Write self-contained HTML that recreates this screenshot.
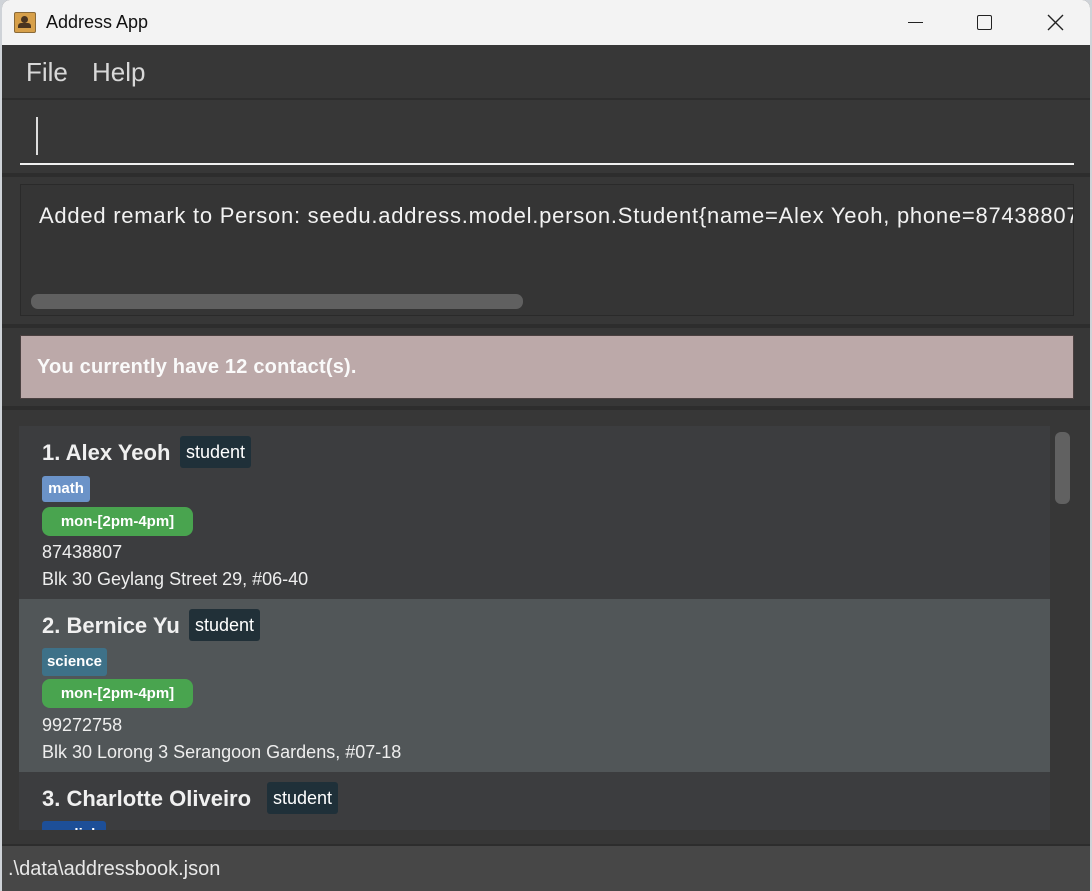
<!DOCTYPE html>
<html><head><meta charset="utf-8"><style>
*{margin:0;padding:0;box-sizing:border-box}
body{width:1092px;height:891px;background:#cfd3d8;position:relative;overflow:hidden;font-family:"Liberation Sans","DejaVu Sans",sans-serif}
.a{position:absolute}
.t{position:absolute;white-space:nowrap;color:#fff}
.tag{position:absolute;height:32px;line-height:32px;font-size:18px;font-weight:bold;color:#fff;border-radius:3px;padding:0 6px}
.name{font-size:22px;font-weight:bold;color:#f0f0f0}
.sm{font-size:15px;font-weight:bold;color:#fff;border-radius:3px;position:absolute;text-align:center}
.inf{font-size:18px;color:#eee}
</style></head><body>
<div class="a" style="left:2px;top:0;width:1088px;height:891px;background:#373737;border-radius:8px 8px 0 0;overflow:hidden">
 <div class="a" style="left:0;top:0;width:1088px;height:45px;background:#f3f3f3"></div>
</div>
<!-- title -->
<div class="a" style="left:14px;top:12px;width:22px;height:21px;background:#d7a04a;border:1px solid #8a6a38;border-radius:2px"></div>
<div class="a" style="left:21px;top:16px;width:7px;height:7px;background:#4a3520;border-radius:50%"></div>
<div class="a" style="left:18px;top:23px;width:13px;height:5px;background:#4a3520;border-radius:3px 3px 0 0"></div>
<div class="t" style="left:46px;top:12px;font-size:18px;color:#111">Address App</div>
<div class="a" style="left:908px;top:22px;width:15px;height:1px;background:#222"></div>
<div class="a" style="left:977px;top:15px;width:15px;height:15px;border:1.5px solid #222;border-radius:2px"></div>
<svg class="a" style="left:1047px;top:14px" width="17" height="17"><path d="M1 1L16 16M16 1L1 16" stroke="#222" stroke-width="1.4"/></svg>
<!-- menu -->
<div class="t" style="left:26px;top:57px;font-size:26px;color:#d8d8d8">File</div>
<div class="t" style="left:92px;top:57px;font-size:26px;color:#d8d8d8">Help</div>
<div class="a" style="left:2px;top:98px;width:1088px;height:2px;background:#2d2d2d"></div>
<!-- command -->
<div class="a" style="left:36px;top:117px;width:2px;height:38px;background:#ddd"></div>
<div class="a" style="left:20px;top:163px;width:1054px;height:2px;background:#f0f0f0"></div>
<div class="a" style="left:2px;top:173px;width:1088px;height:4px;background:#2d2d2d"></div>
<!-- result -->
<div class="a" style="left:20px;top:184px;width:1054px;height:132px;background:#353535;border:1px solid #2a2a2a;overflow:hidden">
 <div class="t" style="left:18px;top:18px;font-size:22px;color:#f2f2f2;letter-spacing:0.75px">Added remark to Person: seedu.address.model.person.Student{name=Alex Yeoh, phone=87438807</div>
 <div class="a" style="left:10px;top:109px;width:492px;height:15px;background:#606060;border-radius:7px"></div>
</div>
<div class="a" style="left:2px;top:324px;width:1088px;height:4px;background:#2d2d2d"></div>
<!-- status -->
<div class="a" style="left:20px;top:335px;width:1054px;height:64px;background:#bca9a9;border:1px solid #4a4040"></div>
<div class="t" style="left:37px;top:356px;font-size:20px;font-weight:bold;color:#fafafa;letter-spacing:0.2px">You currently have 12 contact(s).</div>
<div class="a" style="left:2px;top:406px;width:1088px;height:4px;background:#2d2d2d"></div>
<!-- list -->
<div class="a" style="left:19px;top:426px;width:1031px;height:404px;background:#3c3d3f;overflow:hidden">
 <div class="a" style="left:0;top:173px;width:1031px;height:173px;background:#515658"></div>
 <!-- card 1 -->
 <div class="t name" style="left:23px;top:14px">1. Alex Yeoh</div>
 <div class="tag" style="left:161px;top:10px;background:#1f3039;font-weight:normal">student</div>
 <div class="sm" style="left:23px;top:50px;width:48px;height:26px;line-height:26px;background:#6b93c8">math</div>
 <div class="sm" style="left:23px;top:81px;width:151px;height:29px;line-height:29px;background:#49a44f;border-radius:8px">mon-[2pm-4pm]</div>
 <div class="t inf" style="left:23px;top:116px">87438807</div>
 <div class="t inf" style="left:23px;top:143px">Blk 30 Geylang Street 29, #06-40</div>
 <!-- card 2 -->
 <div class="t name" style="left:23px;top:187px">2. Bernice Yu</div>
 <div class="tag" style="left:170px;top:183px;background:#213038;font-weight:normal">student</div>
 <div class="sm" style="left:23px;top:222px;width:65px;height:28px;line-height:28px;background:#3e7188">science</div>
 <div class="sm" style="left:23px;top:253px;width:151px;height:29px;line-height:29px;background:#49a44f;border-radius:8px">mon-[2pm-4pm]</div>
 <div class="t inf" style="left:23px;top:289px">99272758</div>
 <div class="t inf" style="left:23px;top:316px">Blk 30 Lorong 3 Serangoon Gardens, #07-18</div>
 <!-- card 3 -->
 <div class="t name" style="left:23px;top:360px">3. Charlotte Oliveiro</div>
 <div class="tag" style="left:248px;top:356px;background:#1f3039;font-weight:normal">student</div>
 <div class="sm" style="left:23px;top:395px;width:64px;height:28px;line-height:28px;background:#1d4f98">english</div>
</div>
<div class="a" style="left:1055px;top:432px;width:15px;height:72px;background:#616161;border-radius:6px"></div>
<!-- footer -->
<div class="a" style="left:2px;top:844px;width:1088px;height:2px;background:#2d2d2d"></div>
<div class="a" style="left:2px;top:846px;width:1088px;height:45px;background:#474747"></div>
<div class="t" style="left:8px;top:858px;font-size:20px;color:#e8e8e8">.\data\addressbook.json</div>
</body></html>
